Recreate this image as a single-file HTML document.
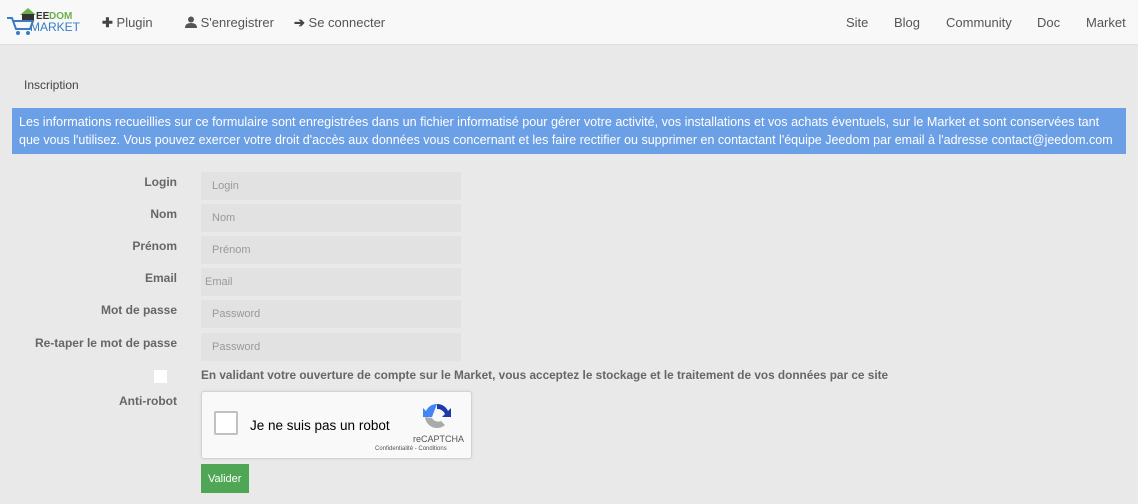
<!DOCTYPE html>
<html><head><meta charset="utf-8"><style>
*{box-sizing:border-box;margin:0;padding:0}
body{width:1138px;height:504px;background:#e9e9e9;font-family:"Liberation Sans",sans-serif;color:#555;overflow:hidden;position:relative}
.nav{position:absolute;left:0;top:0;width:1138px;height:45px;background:#f8f8f8;border-bottom:1px solid #e0e0e0}
.nav span{position:absolute;top:15px;font-size:13px;color:#555;white-space:nowrap}
.t{position:absolute;font-size:13px}
.lab{position:absolute;right:961px;font-size:12px;font-weight:bold;color:#666;white-space:nowrap}
.inp{position:absolute;left:201px;width:260px;height:28px;background:#e2e2e2;font-size:11px;color:#999;padding:8px 11px}
</style></head><body>
<div class="nav">
<svg style="position:absolute;left:6px;top:6px" width="76" height="30" viewBox="0 0 76 30">
<path d="M14 9 L22 2 L30 9" fill="#6ab04c"/><rect x="16" y="8" width="12" height="6" fill="#333"/>
<path d="M1 12 H6 L10 23 H24 L27 15 H8" fill="none" stroke="#3a7cc4" stroke-width="2"/>
<circle cx="12" cy="27" r="2" fill="#3a7cc4"/><circle cx="22" cy="27" r="2" fill="#3a7cc4"/>
<text x="30" y="13" font-family="Liberation Sans" font-weight="bold" font-size="10" fill="#333">EE</text>
<text x="43" y="13" font-family="Liberation Sans" font-weight="bold" font-size="10" fill="#6ab04c">DOM</text>
<text x="24" y="25" font-family="Liberation Sans" font-size="12" fill="#3a7cc4" textLength="50">MARKET</text>
</svg>
<span style="left:102px"><b style="color:#444">✚</b> Plugin</span>
<span style="left:185px"><svg width="12" height="12" viewBox="0 0 12 12" style="vertical-align:-1px"><circle cx="6" cy="3.5" r="3" fill="#555"/><path d="M0 12 Q0 7 6 7 Q12 7 12 12z" fill="#555"/></svg> S'enregistrer</span>
<span style="left:294px"><b style="color:#444">➔</b> Se connecter</span>
<span style="left:846px">Site</span>
<span style="left:894px">Blog</span>
<span style="left:946px">Community</span>
<span style="left:1037px">Doc</span>
<span style="left:1086px">Market</span>
</div>
<div class="t" style="left:24px;top:78px;color:#444;font-size:12px">Inscription</div>
<div style="position:absolute;left:12px;top:108px;width:1114px;height:46px;background:#6b9fe6;color:#fff;line-height:18px;padding:5px 7px;white-space:nowrap;overflow:hidden"><span style="font-size:12.6px">Les informations recueillies sur ce formulaire sont enregistrées dans un fichier informatisé pour gérer votre activité, vos installations et vos achats éventuels, sur le Market et sont conservées tant</span><br><span style="font-size:12.5px">que vous l'utilisez. Vous pouvez exercer votre droit d'accès aux données vous concernant et les faire rectifier ou supprimer en contactant l'équipe Jeedom par email à l'adresse contact@jeedom.com</span></div>
<div class="lab" style="top:175px">Login</div><div class="inp" style="top:172px">Login</div>
<div class="lab" style="top:207px">Nom</div><div class="inp" style="top:204px">Nom</div>
<div class="lab" style="top:239px">Prénom</div><div class="inp" style="top:236px">Prénom</div>
<div class="lab" style="top:271px">Email</div><div class="inp" style="top:268px;padding-left:4px">Email</div>
<div class="lab" style="top:303px">Mot de passe</div><div class="inp" style="top:300px">Password</div>
<div class="lab" style="top:336px">Re-taper le mot de passe</div><div class="inp" style="top:333px">Password</div>
<div style="position:absolute;left:154px;top:370px;width:13px;height:13px;background:#fff"></div>
<div class="t" style="left:201px;top:368px;font-weight:bold;color:#666;font-size:11.8px;white-space:nowrap">En validant votre ouverture de compte sur le Market, vous acceptez le stockage et le traitement de vos données par ce site</div>
<div class="lab" style="top:394px">Anti-robot</div>
<div style="position:absolute;left:201px;top:391px;width:271px;height:68px;background:#f9f9f9;border:1px solid #d3d3d3;border-radius:3px;box-shadow:0 0 3px rgba(0,0,0,.08)">
<div style="position:absolute;left:12px;top:19px;width:24px;height:24px;background:#fff;border:2px solid #c1c1c1;border-radius:2px"></div>
<div style="position:absolute;left:48px;top:26px;font-size:13.5px;color:#000">Je ne suis pas un robot</div>
<svg style="position:absolute;left:220px;top:9px" width="30" height="30" viewBox="0 0 30 30"><path d="M15 3a12 12 0 0 1 11 7l3-3v9h-9l3-3a8 8 0 0 0-8-5z" fill="#1c3aa9"/><path d="M15 3a12 12 0 0 0-11 7l-3-3v9h9" fill="#4285f4"/><path d="M3 16a12 12 0 0 0 12 11a12 12 0 0 0 8-3l-4-4a7 7 0 0 1-9-3z" fill="#aaa"/></svg>
<div style="position:absolute;left:211px;top:42px;font-size:9px;color:#555">reCAPTCHA</div>
<div style="position:absolute;left:173px;top:54px;font-size:6px;color:#555">Confidentialité - Conditions</div>
</div>
<div style="position:absolute;left:201px;top:464px;width:48px;height:29px;background:#4fa654;color:#fff;font-size:11px;padding:9px 7px">Valider</div>
</body></html>
